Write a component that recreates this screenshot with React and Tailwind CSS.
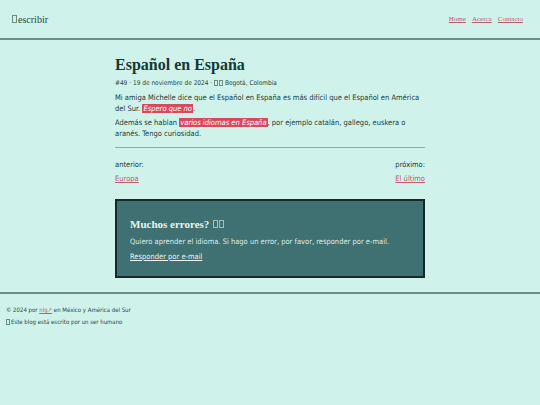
import React from 'react';

const sans = { fontFamily: '"DejaVu Sans Condensed", "DejaVu Sans", Verdana, sans-serif', fontStretch: 'condensed' };

// missing-glyph box, as the emoji show up in the reference
const Tofu = ({ className = '' }) => (
  <span className={'inline-block align-[-1px] border border-current opacity-60 ' + className}></span>
);

const App = () => {
  return (
    <div className="min-h-[405px] bg-[#cff3ea] text-[#1d3a3a]" style={sans}>
      <header className="flex items-center justify-between px-3 h-[40px] border-b-2 border-[#6f8c84]">
        <a href="#" className="text-[10px] text-[#2b4444] font-['Liberation_Serif',serif] flex items-center">
          <Tofu className="w-[5px] h-[8px] mr-[1px]" />escribir
        </a>
        <nav className="flex gap-[6px] text-[7px] font-['Liberation_Serif',serif] mr-[5px]">
          <a href="#" className="underline text-[#b85a6e]">Home</a>
          <a href="#" className="underline text-[#b85a6e]">Acerca</a>
          <a href="#" className="underline text-[#b85a6e]">Contacto</a>
        </nav>
      </header>

      <main className="w-[310px] mx-auto pt-[15px]">
        <h1 className="text-[16px] font-bold leading-[20px] text-[#153838] font-['Liberation_Serif',serif]">Español en España</h1>
        <p className="text-[6.5px] leading-[8px] mt-[4px] text-[#2b4444]">
          #49 · 19 de noviembre de 2024 · <Tofu className="w-[4px] h-[6px]" /><Tofu className="w-[4px] h-[6px] ml-[1px]" /> Bogotá, Colombia
        </p>

        <p className="text-[7.5px] leading-[11px] mt-[5px]">
          Mi amiga Michelle dice que el Español en España es más difícil que el Español en América del Sur.{' '}
          <a href="#" className="italic text-white bg-[#d9485f] px-[1px]">Espero que no</a>.
        </p>
        <p className="text-[7.5px] leading-[11px] mt-[3px]">
          Además se hablan{' '}
          <a href="#" className="italic text-white bg-[#d9485f] px-[1px]">varios idiomas en España</a>, por ejemplo catalán, gallego, euskera o aranés. Tengo curiosidad.
        </p>

        <div className="border-t border-[#93aaa4] mt-[8px]"></div>

        <div className="flex justify-between mt-[11px] text-[7.5px]">
          <div>
            <p>anterior:</p>
            <a href="#" className="block mt-[3px] underline text-[#c05a6e]">Europa</a>
          </div>
          <div className="text-right">
            <p>próximo:</p>
            <a href="#" className="block mt-[3px] underline text-[#c05a6e]">El último</a>
          </div>
        </div>

        <div className="mt-[14px] bg-[#3f7072] border-2 border-[#16292a] px-[13px] pt-[16px] pb-[14px] text-[#dceeea]">
          <h2 className="text-[11px] leading-[14px] font-bold text-[#e8f5f2] font-['Liberation_Serif',serif] flex items-center">
            Muchos errores?
            <Tofu className="w-[5px] h-[8px] ml-[4px]" /><Tofu className="w-[5px] h-[8px] ml-[1px]" />
          </h2>
          <p className="text-[7.5px] mt-[5px]">Quiero aprender el idioma. Si hago un error, por favor, responder por e-mail.</p>
          <a href="#" className="block mt-[4px] text-[7.5px] underline text-[#e8f5f2]">Responder por e-mail</a>
        </div>
      </main>

      <footer className="mt-[14px] border-t-2 border-[#6f8c84] px-[6px] pt-[11px] text-[6px] text-[#2b4444]">
        <p>© 2024 por <a href="#" className="underline text-[#c05a6e]">nlg↗</a> en México y América del Sur</p>
        <p className="mt-[3px] flex items-center">
          <Tofu className="w-[4px] h-[6px] mr-[1px]" />Este blog está escrito por un ser humano
        </p>
      </footer>
    </div>
  );
};

export default App;
